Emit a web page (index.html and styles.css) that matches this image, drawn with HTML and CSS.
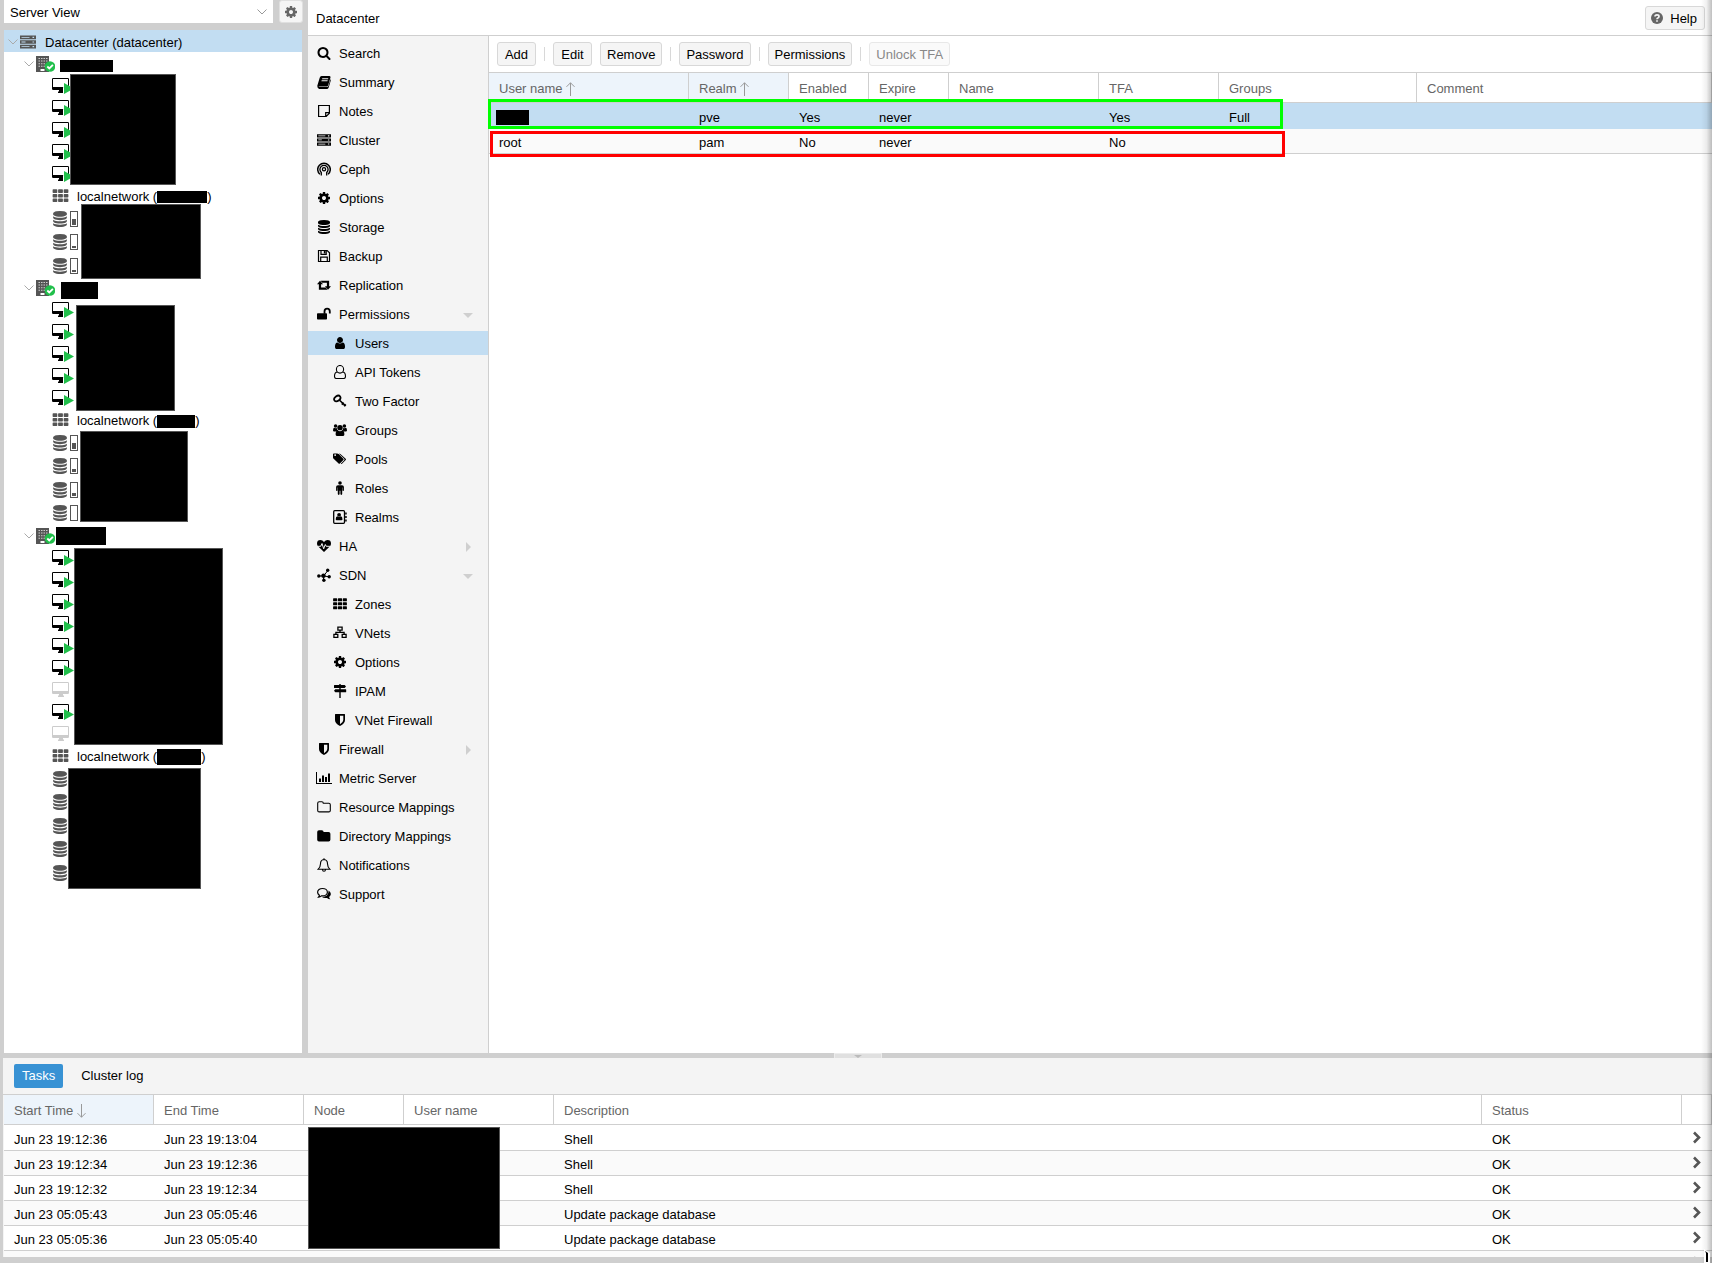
FILE: index.html
```html
<!DOCTYPE html>
<html lang="en">
<head>
<meta charset="utf-8">
<title>Datacenter - Users</title>
<link rel="stylesheet" href="styles.css">
</head>
<body>
<svg class="sprite" aria-hidden="true">
  <symbol id="search" viewBox="0 0 1792 1792"><path d="M1216 832q0-185-131.500-316.500t-316.500-131.500-316.500 131.500-131.500 316.500 131.500 316.500 316.500 131.500 316.500-131.500 131.500-316.500zm512 832q0 52-38 90t-90 38q-54 0-90-38l-343-342q-179 124-399 124-143 0-273.500-55.500t-225-150-150-225-55.500-273.500 55.500-273.500 150-225 225-150 273.500-55.500 273.500 55.500 225 150 150 225 55.500 273.500q0 220-124 399l343 343q37 37 37 90z"/></symbol>
  <symbol id="cog" viewBox="0 0 1792 1792"><path d="M1152 896q0-106-75-181t-181-75-181 75-75 181 75 181 181 75 181-75 75-181zm512-109v222q0 12-8 23t-20 13l-185 28q-19 54-39 91 35 50 107 138 10 12 10 25t-9 23q-27 37-99 108t-94 71q-12 0-26-9l-138-108q-44 23-91 38-16 136-29 186-7 28-36 28h-222q-14 0-24.500-8.500t-11.500-21.500l-28-184q-49-16-90-37l-141 107q-10 9-25 9-14 0-25-11-126-114-165-168-7-10-7-23 0-12 8-23 15-21 51-66.500t54-70.500q-27-50-41-99l-183-27q-13-2-21-12.500t-8-23.500v-222q0-12 8-23t19-13l186-28q14-46 39-92-40-57-107-138-10-12-10-24 0-10 9-23 26-36 98.500-107.500t94.500-71.500q13 0 26 10l138 107q44-23 91-38 16-136 29-186 7-28 36-28h222q14 0 24.500 8.500t11.500 21.500l28 184q49 16 90 37l142-107q9-9 24-9 13 0 25 10 129 119 165 170 7 8 7 22 0 12-8 23-15 21-51 66.500t-54 70.500q26 50 41 98l183 28q13 2 21 12.500t8 23.500z"/></symbol>
  <symbol id="database" viewBox="0 0 1792 1792"><path d="M896 768q237 0 443-43t325-127v170q0 69-103 128t-280 93.500-385 34.500-385-34.500-280-93.500-103-128v-170q119 84 325 127t443 43zm0 768q237 0 443-43t325-127v170q0 69-103 128t-280 93.500-385 34.500-385-34.500-280-93.500-103-128v-170q119 84 325 127t443 43zm0-384q237 0 443-43t325-127v170q0 69-103 128t-280 93.500-385 34.500-385-34.500-280-93.500-103-128v-170q119 84 325 127t443 43zm0-1152q208 0 385 34.500t280 93.500 103 128v128q0 69-103 128t-280 93.500-385 34.500-385-34.500-280-93.500-103-128v-128q0-69 103-128t280-93.500 385-34.500z"/></symbol>
  <symbol id="user" viewBox="0 0 1792 1792"><path d="M1536 1399q0 109-62.500 187t-150.500 78h-854q-88 0-150.500-78t-62.500-187q0-85 8.500-160.500t31.500-152 58.500-131 94-89 134.500-34.500q131 128 313 128t313-128q76 0 134.500 34.500t94 89 58.500 131 31.500 152 8.500 160.500zm-256-887q0 159-112.500 271.500t-271.500 112.500-271.500-112.500-112.500-271.500 112.500-271.500 271.500-112.500 271.500 112.500 112.500 271.500z"/></symbol>
  <symbol id="user-o" viewBox="0 0 14 14"><path fill="none" stroke="currentColor" stroke-width="1.100" d="M4.500 7C2.500 7 1.500 9 1.500 11.500q0 2 1.800 2h7.400q1.800 0 1.800-2C12.500 9 11.500 7 9.500 7M7 .5a3.600 3.800 0 1 1 0 7.600 3.600 3.800 0 1 1 0-7.600z"/></symbol>
  <symbol id="book" viewBox="0 0 14 14"><path fill-rule="evenodd" d="M4.500 1h8q1.300.2 1 1.500l-2.400 8q-.4 1-1.400 1H2.500q-1 0-1 .6h8.600q1 0 1.300-1l2.100-7q.5.700.2 1.600l-2 6.800q-.5 1.500-2 1.500H2Q0 12.800.3 10.800l2.400-8Q3.200 1 4.500 1zM5.300 3.300 5 4.200h6l.3-.9zM4.700 5.300l-.3.900h6l.3-.9z"/></symbol>
  <symbol id="note" viewBox="0 0 14 14"><path fill="none" stroke="currentColor" stroke-width="1.200" d="M1.600 1.500h10.800v7.700l-3.200 3.300H1.600zM12.400 8.700H8.700v3.800"/></symbol>
  <symbol id="server" viewBox="0 0 16 14"><path fill-rule="evenodd" d="M0 .5h16v3.700H0zM0 5.200h16v3.600H0zM0 9.800h16v3.700H0zM1.500 1.900v.9h8v-.9zM1.500 6.500v.9h4v-.9zM1.500 11.200v.9h8v-.9zM12.500 1.700v1.200h1.600V1.700zM12.500 6.400v1.200h1.600V6.400zM12.500 11v1.200h1.600V11z"/></symbol>
  <symbol id="ceph" viewBox="0 0 14 14"><g fill="none" stroke="currentColor"><path stroke-width="1.500" d="M2.900 12.300A6.300 6.300 0 1 1 11.100 12.300"/><path stroke-width="1.300" d="M4.300 13.500v-3A4.100 4.100 0 1 1 9.700 10.500v3"/><circle cx="7" cy="7.200" r="1.600" stroke-width="1.300"/></g></symbol>
  <symbol id="floppy" viewBox="0 0 14 14"><path fill="none" stroke="currentColor" stroke-width="1.200" d="M1.500 1.500h8.700l2.300 2.300v8.700h-11zM3.700 12.500V8.200h6.600v4.300M4 1.500v3.800h5.200V1.500"/><path d="M6.800 1.500h1.700v3H6.800z"/></symbol>
  <symbol id="retweet" viewBox="0 0 15 14"><path d="M3.200 2.500 6.500 6.200H4.400v3.600h4.900l1.900 2.200H2V6.200H0zM11.800 12 8.500 8.300h2.100V4.700H5.700L3.800 2.500H13v5.800h2z"/></symbol>
  <symbol id="unlock" viewBox="0 0 14 14"><path d="M.8 6.200h8.400q.8 0 .8.800v4.700q0 .8-.8.800H.8q-.8 0-.8-.8V7q0-.8.800-.8z"/><path fill="none" stroke="currentColor" stroke-width="1.800" d="M7.500 6.700V4.400a2.600 2.700 0 0 1 5.300 0v2"/></symbol>
  <symbol id="key" viewBox="0 0 14 14"><ellipse cx="4.300" cy="4.500" rx="3.400" ry="2.400" transform="rotate(-35 4.300 4.500)" fill="none" stroke="currentColor" stroke-width="1.800"/><path fill="none" stroke="currentColor" stroke-width="1.700" d="m6.300 6 6.400 6M8.800 10.600l1.900-1.900M11 12.200l1.800-1.800"/></symbol>
  <symbol id="users" viewBox="0 0 15 14"><circle cx="2.800" cy="2.800" r="1.900"/><circle cx="12.200" cy="2.800" r="1.900"/><circle cx="7.500" cy="4.500" r="2.900"/><path d="M0 7.500Q0 4.700 1.200 4.700q1.500.9 3 .2-.2 1.800 1 2.600-1.500 0-2.200 1H1.300Q0 8.500 0 7.500zM15 7.500q0-2.800-1.200-2.800-1.500.9-3 .2.200 1.800-1 2.600 1.500 0 2.200 1h1.700q1.300 0 1.300-1zM2.800 11.800c0-2.500.7-4.400 2.300-4.400q2.400 1.800 4.800 0c1.600 0 2.300 1.900 2.300 4.400q0 1.700-1.700 1.700h-6q-1.700 0-1.700-1.700z"/></symbol>
  <symbol id="tags" viewBox="0 0 15 14"><path fill-rule="evenodd" d="M0 1.900Q0 1 .9 1h3.500q1 0 1.700.7l5 5q.7.700 0 1.400l-3.700 3.700q-.7.700-1.400 0l-5.300-5Q0 6.200 0 5.300zm1.300.9a1 1 0 1 0 2 0 1 1 0 1 0-2 0z"/><path d="M6.200 1q1 0 1.700.7l5.700 5q.7.700 0 1.400l-4 3.900q-.6.600-1.200 0l3.800-3.800q.5-.8-.2-1.500z"/></symbol>
  <symbol id="male" viewBox="0 0 14 14"><circle cx="7" cy="2" r="1.800"/><path d="M5 4.200h4q1.900 0 1.900 1.800v3.200q0 .7-.7.700t-.7-.7V6.500H9.200v6.600q0 .8-.9.800t-.9-.8V9.700h-.8v3.400q0 .8-.9.800t-.9-.8V6.500h-.3v2.700q0 .7-.7.700t-.7-.7V6q0-1.800 1.900-1.800z"/></symbol>
  <symbol id="address" viewBox="0 0 14 14"><rect x=".7" y=".7" width="10.800" height="12.600" rx="1" fill="none" stroke="currentColor" stroke-width="1.300"/><circle cx="6.100" cy="4.800" r="1.900"/><path d="M2.700 9.300q0-2.800 1.800-3 1.600 1.200 3.200 0 1.800.2 1.800 3 0 1-1 1H3.700q-1 0-1-1zM12.200 2.500h1.500v2h-1.500zM12.200 6h1.500v2h-1.500zM12.200 9.500h1.500v2h-1.500z"/></symbol>
  <symbol id="heart" viewBox="0 0 14 14"><path d="M7 13 1 7.200Q0 6 0 4.400 0 1 3.500 1 5.500 1 7 3q1.500-2 3.500-2Q14 1 14 4.400q0 1.600-1 2.800z"/><path fill="none" stroke="#f4f4f4" stroke-width="1" d="M.7 7.300h3L5 4.500l1.700 5.300L8.300 5.500l.9 1.800h4"/></symbol>
  <symbol id="sdn" viewBox="0 0 14 14"><path fill="none" stroke="currentColor" d="m2 8 4.500 0L10.500 3M6.500 8l6 .8M6.500 8v4"/><circle cx="1.800" cy="8" r="1.700"/><circle cx="6.500" cy="7.800" r="2.200"/><circle cx="10.700" cy="2.300" r="1.700"/><circle cx="12.200" cy="8.800" r="1.700"/><circle cx="6.900" cy="12.200" r="1.700"/></symbol>
  <symbol id="grid" viewBox="0 0 14 14"><path d="M.7 1.200h2.900q.6 0 .6.600v1.900q0 .6-.6.600H.7q-.6 0-.6-.6V1.800q0-.6.600-.6zm4.800 0h3q.6 0 .6.600v1.900q0 .6-.6.600h-3q-.6 0-.6-.6V1.800q0-.6.600-.6zm4.900 0h2.900q.6 0 .6.600v1.900q0 .6-.6.600h-2.900q-.6 0-.6-.6V1.800q0-.6.600-.6zM.7 5.200h2.900q.6 0 .6.600v1.900q0 .6-.6.600H.7q-.6 0-.6-.6V5.800q0-.6.600-.6zm4.800 0h3q.6 0 .6.600v1.900q0 .6-.6.600h-3q-.6 0-.6-.6V5.800q0-.6.600-.6zm4.900 0h2.900q.6 0 .6.600v1.900q0 .6-.6.600h-2.900q-.6 0-.6-.6V5.800q0-.6.600-.6zM.7 9.200h2.900q.6 0 .6.600v1.900q0 .6-.6.600H.7q-.6 0-.6-.6V9.800q0-.6.600-.6zm4.800 0h3q.6 0 .6.600v1.900q0 .6-.6.600h-3q-.6 0-.6-.6V9.800q0-.6.600-.6zm4.900 0h2.900q.6 0 .6.600v1.900q0 .6-.6.600h-2.900q-.6 0-.6-.6V9.800q0-.6.600-.6z"/></symbol>
  <symbol id="sitemap" viewBox="0 0 14 14"><path fill="none" stroke="currentColor" stroke-width="1.300" d="M4.900 1.200h4.200v2.900H4.900zM.9 8.300h3.900v3H.9zM9.200 8.300h3.900v3H9.200zM7 4v2.300M2.900 8.500V6.300h8.200v2.200"/></symbol>
  <symbol id="signs" viewBox="0 0 14 14"><path d="M6.300 0h1.400v1h4l1.300 1.500L11.700 4H1.500q-.5 0-.5-.5v-2Q1 1 1.500 1h4.800zM6.300 4h1.400v1.300h5q.5 0 .5.500v2q0 .5-.5.500H2.300L1 6.800l1.300-1.500h4zM6.300 8.300h1.400V14H6.300z"/></symbol>
  <symbol id="shield" viewBox="0 0 14 14"><path fill-rule="evenodd" d="M2 1.500q0-.5.500-.5h9q.5 0 .5.500V7q0 3.600-5 6Q2 10.600 2 7zm5 1.200v8.500q3.300-2 3.300-4.200V2.700z"/></symbol>
  <symbol id="chart" viewBox="0 0 16 14"><path d="M0 1h1v11h15v1H0zM3 7.500h2V11H3zM6 4.500h2V11H6zM9 6h2v5H9zM12 2.500h2V11h-2z"/></symbol>
  <symbol id="folder-o" viewBox="0 0 14 14"><path fill="none" stroke="currentColor" stroke-width="1.100" d="M2.200 1.700h2.600q1.500 0 1.500 1.500h5.500q1.500 0 1.500 1.500v5.700q0 1.500-1.500 1.500H2.200q-1.500 0-1.500-1.500V3.200q0-1.500 1.500-1.500z"/></symbol>
  <symbol id="folder" viewBox="0 0 14 14"><path d="M2 1.200h2.800q1.800 0 1.800 1.700h5q1.800 0 1.800 1.800v6q0 1.800-1.800 1.800H2Q.2 12.500.2 10.700V3Q.2 1.200 2 1.200z"/></symbol>
  <symbol id="bell" viewBox="0 0 14 14"><path fill="none" stroke="currentColor" stroke-width="1.100" d="M7 1.500q3.500.4 3.500 4.200 0 3.400 2.500 5.600H1q2.500-2.200 2.500-5.600Q3.500 1.900 7 1.500zM7 .2v1.300M5.500 11.400q0 1.900 1.500 1.900t1.500-1.900"/></symbol>
  <symbol id="comments" viewBox="0 0 14 14"><path fill="none" stroke="currentColor" stroke-width="1.200" d="M5.500 1.500c2.800 0 4.900 1.600 4.900 3.700S8.300 8.900 5.500 8.900L4.400 8.800Q3.200 10 1.500 10.100q.8-.9.900-1.900Q.6 7 .6 5.200C.6 3.100 2.700 1.500 5.500 1.500z"/><path d="M11.600 3.600q4.300 3.400.5 6.400.2 1.300 1.300 2.200-1.800.1-3.400-1.300-3.200.5-5-.9 6.700 0 6.600-6.400z"/></symbol>
  <symbol id="building" viewBox="0 0 19 16"><path fill="#555" d="M0 0h13v16H0z"/><path fill="none" stroke="#fff" stroke-width="9" stroke-dasharray="1 1.600" d="M7 2v9.500" opacity=".7"/><path stroke="#555" stroke-width="1" d="M4.500 1v11M7 1v11M9.500 1v11"/><path fill="#fff" d="M4.500 13h4v2h-4z"/><circle cx="14" cy="10.500" r="5.300" fill="#21bf4b"/><path fill="none" stroke="#fff" stroke-width="1.800" d="m11.300 10.500 2 2 3.600-3.700"/></symbol>
  <symbol id="monitor" viewBox="0 0 23 16"><path fill-rule="evenodd" d="M1.200 0h14.600Q17 0 17 1.200V11q0 1-1.200 1H11v1.500h1V15H6v-1.500h1V12H1.200Q0 12 0 11V1.200Q0 0 1.200 0zM1 1v8h15V1z"/></symbol>
  <symbol id="play" viewBox="0 0 23 16"><path fill="#fff" d="M11 4.500V16h2z"/><path fill="#21bf4b" d="M12 5v11l10-5.500z"/></symbol>
  <symbol id="chevron" viewBox="0 0 10 6"><path fill="none" stroke="currentColor" d="m.5.5 4.500 4.500L9.500.5"/></symbol>
  <symbol id="arrow" viewBox="0 0 9 14"><path fill="none" stroke="currentColor" d="M4.500 14V.7M.5 4.800l4-4 4 4"/></symbol>
  <symbol id="right" viewBox="0 0 8 13"><path fill="none" stroke="currentColor" stroke-width="2.600" d="m1 1.500 5 5-5 5"/></symbol>
</svg>

<div class="workspace">
  <aside class="resources">
    <div class="view-bar">
      <div class="view-picker">
        <select aria-label="View"><option>Server View</option></select>
        <svg class="picker-arrow"><use href="#chevron"/></svg>
      </div>
      <button class="gear" aria-label="Settings"><svg class="icon"><use href="#cog"/></svg></button>
    </div>
    <div class="tree">
      <div class="row root"><svg class="twist"><use href="#chevron"/></svg><svg class="server"><use href="#server"/></svg>Datacenter (datacenter)</div>

      <div class="row host"><svg class="twist"><use href="#chevron"/></svg><svg class="building"><use href="#building"/></svg><span class="mask name-a"></span></div>
      <div class="group">
        <div class="row leaf"><svg class="vm"><use href="#monitor"/><use href="#play"/></svg></div>
        <div class="row leaf"><svg class="vm"><use href="#monitor"/><use href="#play"/></svg></div>
        <div class="row leaf"><svg class="vm"><use href="#monitor"/><use href="#play"/></svg></div>
        <div class="row leaf"><svg class="vm"><use href="#monitor"/><use href="#play"/></svg></div>
        <div class="row leaf"><svg class="vm"><use href="#monitor"/><use href="#play"/></svg></div>
        <span class="mask over guests-a"></span>
      </div>
      <div class="row leaf named"><svg class="net"><use href="#grid"/></svg>localnetwork (<span class="mask net-a"></span>)</div>
      <div class="group stores">
        <div class="row leaf"><svg class="disk"><use href="#database"/></svg><span class="usage"><i style="height:50%"></i></span></div>
        <div class="row leaf"><svg class="disk"><use href="#database"/></svg><span class="usage"><i style="height:17%"></i></span></div>
        <div class="row leaf"><svg class="disk"><use href="#database"/></svg><span class="usage"><i style="height:9%"></i></span></div>
        <span class="mask over stores-a"></span>
      </div>

      <div class="row host"><svg class="twist"><use href="#chevron"/></svg><svg class="building"><use href="#building"/></svg><span class="mask name-b"></span></div>
      <div class="group">
        <div class="row leaf"><svg class="vm"><use href="#monitor"/><use href="#play"/></svg></div>
        <div class="row leaf"><svg class="vm"><use href="#monitor"/><use href="#play"/></svg></div>
        <div class="row leaf"><svg class="vm"><use href="#monitor"/><use href="#play"/></svg></div>
        <div class="row leaf"><svg class="vm"><use href="#monitor"/><use href="#play"/></svg></div>
        <div class="row leaf"><svg class="vm"><use href="#monitor"/><use href="#play"/></svg></div>
        <span class="mask over guests-b"></span>
      </div>
      <div class="row leaf named"><svg class="net"><use href="#grid"/></svg>localnetwork (<span class="mask net-b"></span>)</div>
      <div class="group stores">
        <div class="row leaf"><svg class="disk"><use href="#database"/></svg><span class="usage"><i style="height:50%"></i></span></div>
        <div class="row leaf"><svg class="disk"><use href="#database"/></svg><span class="usage"><i style="height:25%"></i></span></div>
        <div class="row leaf"><svg class="disk"><use href="#database"/></svg><span class="usage"><i style="height:17%"></i></span></div>
        <div class="row leaf"><svg class="disk"><use href="#database"/></svg><span class="usage"><i style="height:0%"></i></span></div>
        <span class="mask over stores-b"></span>
      </div>

      <div class="row host"><svg class="twist"><use href="#chevron"/></svg><svg class="building"><use href="#building"/></svg><span class="mask name-c"></span></div>
      <div class="group">
        <div class="row leaf"><svg class="vm"><use href="#monitor"/><use href="#play"/></svg></div>
        <div class="row leaf"><svg class="vm"><use href="#monitor"/><use href="#play"/></svg></div>
        <div class="row leaf"><svg class="vm"><use href="#monitor"/><use href="#play"/></svg></div>
        <div class="row leaf"><svg class="vm"><use href="#monitor"/><use href="#play"/></svg></div>
        <div class="row leaf"><svg class="vm"><use href="#monitor"/><use href="#play"/></svg></div>
        <div class="row leaf"><svg class="vm"><use href="#monitor"/><use href="#play"/></svg></div>
        <div class="row leaf"><svg class="vm off"><use href="#monitor"/></svg></div>
        <div class="row leaf"><svg class="vm"><use href="#monitor"/><use href="#play"/></svg></div>
        <div class="row leaf"><svg class="vm off"><use href="#monitor"/></svg></div>
        <span class="mask over guests-c"></span>
      </div>
      <div class="row leaf named"><svg class="net"><use href="#grid"/></svg>localnetwork (<span class="mask net-c"></span>)</div>
      <div class="group stores">
        <div class="row leaf"><svg class="disk"><use href="#database"/></svg></div>
        <div class="row leaf"><svg class="disk"><use href="#database"/></svg></div>
        <div class="row leaf"><svg class="disk"><use href="#database"/></svg></div>
        <div class="row leaf"><svg class="disk"><use href="#database"/></svg></div>
        <div class="row leaf"><svg class="disk"><use href="#database"/></svg></div>
        <span class="mask over stores-c"></span>
      </div>
    </div>
  </aside>

  <main class="content">
    <header class="title-bar">
      <span class="title">Datacenter</span>
      <button class="btn help"><svg class="icon" viewBox="0 0 14 14"><circle cx="7" cy="7" r="6"/><path fill="none" stroke="#f5f5f5" stroke-width="1.700" d="M5 5.600Q5 3.900 7 3.900t2 1.500q0 1-1.100 1.500Q7 7.300 7 8.300M7 9.200v1.600"/></svg>Help</button>
    </header>
    <div class="split">
      <nav class="menu">
        <a href="#"><svg class="icon"><use href="#search"/></svg>Search</a>
        <a href="#"><svg class="icon"><use href="#book"/></svg>Summary</a>
        <a href="#"><svg class="icon"><use href="#note"/></svg>Notes</a>
        <a href="#"><svg class="icon"><use href="#server"/></svg>Cluster</a>
        <a href="#"><svg class="icon"><use href="#ceph"/></svg>Ceph</a>
        <a href="#"><svg class="icon"><use href="#cog"/></svg>Options</a>
        <a href="#"><svg class="icon"><use href="#database"/></svg>Storage</a>
        <a href="#"><svg class="icon"><use href="#floppy"/></svg>Backup</a>
        <a href="#"><svg class="icon"><use href="#retweet"/></svg>Replication</a>
        <a href="#" class="open"><svg class="icon"><use href="#unlock"/></svg>Permissions</a>
        <a href="#" class="sub current"><svg class="icon"><use href="#user"/></svg>Users</a>
        <a href="#" class="sub"><svg class="icon"><use href="#user-o"/></svg>API Tokens</a>
        <a href="#" class="sub"><svg class="icon"><use href="#key"/></svg>Two Factor</a>
        <a href="#" class="sub"><svg class="icon"><use href="#users"/></svg>Groups</a>
        <a href="#" class="sub"><svg class="icon"><use href="#tags"/></svg>Pools</a>
        <a href="#" class="sub"><svg class="icon"><use href="#male"/></svg>Roles</a>
        <a href="#" class="sub"><svg class="icon"><use href="#address"/></svg>Realms</a>
        <a href="#" class="closed"><svg class="icon"><use href="#heart"/></svg>HA</a>
        <a href="#" class="open"><svg class="icon"><use href="#sdn"/></svg>SDN</a>
        <a href="#" class="sub"><svg class="icon"><use href="#grid"/></svg>Zones</a>
        <a href="#" class="sub"><svg class="icon"><use href="#sitemap"/></svg>VNets</a>
        <a href="#" class="sub"><svg class="icon"><use href="#cog"/></svg>Options</a>
        <a href="#" class="sub"><svg class="icon"><use href="#signs"/></svg>IPAM</a>
        <a href="#" class="sub"><svg class="icon"><use href="#shield"/></svg>VNet Firewall</a>
        <a href="#" class="closed"><svg class="icon"><use href="#shield"/></svg>Firewall</a>
        <a href="#" class="wide"><svg class="icon"><use href="#chart"/></svg>Metric Server</a>
        <a href="#"><svg class="icon"><use href="#folder-o"/></svg>Resource Mappings</a>
        <a href="#"><svg class="icon"><use href="#folder"/></svg>Directory Mappings</a>
        <a href="#"><svg class="icon"><use href="#bell"/></svg>Notifications</a>
        <a href="#"><svg class="icon"><use href="#comments"/></svg>Support</a>
      </nav>
      <section class="users">
        <div class="toolbar">
          <button class="btn">Add</button><i class="sep"></i>
          <button class="btn">Edit</button>
          <button class="btn">Remove</button><i class="sep"></i>
          <button class="btn">Password</button><i class="sep"></i>
          <button class="btn">Permissions</button><i class="sep"></i>
          <button class="btn" disabled>Unlock TFA</button>
        </div>
        <div class="grid-area">
          <table>
            <colgroup><col class="w200"><col class="w100"><col class="w80"><col class="w80"><col class="w150"><col class="w120"><col class="w198"><col></colgroup>
            <thead><tr><th class="sorted">User name <svg class="sort"><use href="#arrow"/></svg></th><th class="sorted">Realm <svg class="sort"><use href="#arrow"/></svg></th><th>Enabled</th><th>Expire</th><th>Name</th><th>TFA</th><th>Groups</th><th>Comment</th></tr></thead>
            <tbody>
              <tr class="selected"><td><span class="mask user-name"></span></td><td>pve</td><td>Yes</td><td>never</td><td></td><td>Yes</td><td>Full</td><td></td></tr>
              <tr><td>root</td><td>pam</td><td>No</td><td>never</td><td></td><td>No</td><td></td><td></td></tr>
            </tbody>
          </table>
          <span class="frame green"></span>
          <span class="frame red"></span>
        </div>
      </section>
    </div>
  </main>
</div>

<div class="splitter"><button class="collapse" aria-label="Collapse log"></button></div>

<section class="log">
  <div class="tabs"><button class="tab active">Tasks</button><button class="tab">Cluster log</button></div>
  <div class="log-grid">
    <table>
      <colgroup><col class="w150"><col class="w150"><col class="w100"><col class="w150"><col><col class="w200"><col class="w30"></colgroup>
      <thead><tr><th class="sorted">Start Time <svg class="sort down"><use href="#arrow"/></svg></th><th>End Time</th><th>Node</th><th>User name</th><th>Description</th><th>Status</th><th></th></tr></thead>
      <tbody>
        <tr><td>Jun 23 19:12:36</td><td>Jun 23 19:13:04</td><td></td><td></td><td>Shell</td><td>OK</td><td class="go"><svg><use href="#right"/></svg></td></tr>
        <tr><td>Jun 23 19:12:34</td><td>Jun 23 19:12:36</td><td></td><td></td><td>Shell</td><td>OK</td><td class="go"><svg><use href="#right"/></svg></td></tr>
        <tr><td>Jun 23 19:12:32</td><td>Jun 23 19:12:34</td><td></td><td></td><td>Shell</td><td>OK</td><td class="go"><svg><use href="#right"/></svg></td></tr>
        <tr><td>Jun 23 05:05:43</td><td>Jun 23 05:05:46</td><td></td><td></td><td>Update package database</td><td>OK</td><td class="go"><svg><use href="#right"/></svg></td></tr>
        <tr><td>Jun 23 05:05:36</td><td>Jun 23 05:05:40</td><td></td><td></td><td>Update package database</td><td>OK</td><td class="go"><svg><use href="#right"/></svg></td></tr>
        <tr><td></td><td></td><td></td><td></td><td></td><td></td><td class="go"><svg><use href="#right"/></svg></td></tr>
      </tbody>
    </table>
    <span class="mask over log-mask"></span>
  </div>
</section>
<div class="edge-shade"></div>
<svg class="pointer" viewBox="0 0 6 14"><path fill="#fff" d="M0 0l6 4v10H0z"/><path d="M1 2l3 2v9H2V4z"/></svg>
</body>
</html>
```

FILE: styles.css
```css
* { box-sizing: border-box; }

body {
  margin: 0;
  height: 100vh;
  display: flex;
  flex-direction: column;
  position: relative;
  overflow: hidden;
  padding-bottom: 6px;
  background: #cfcfcf;
  color: #000;
  font: 13px/16px "Liberation Sans", Arial, sans-serif;
}

button, select { font: inherit; color: inherit; margin: 0; }
svg { display: block; flex: none; fill: currentColor; }
.sprite { position: absolute; width: 0; height: 0; }
.icon { width: 14px; height: 14px; overflow: visible; }

.workspace { flex: 1; min-height: 0; display: flex; gap: 6px; padding-left: 4px; }

/* resource tree */
.resources { width: 298px; flex: none; display: flex; flex-direction: column; gap: 7px; }
.view-bar { display: flex; gap: 6px; height: 23px; margin-right: -1px; }
.view-picker { flex: 1; position: relative; background: #fff; }
.view-picker select {
  width: 100%;
  height: 23px;
  padding: 2px 6px 0;
  border: 0;
  background: none;
  appearance: none;
}
.picker-arrow { position: absolute; right: 6px; top: 9px; width: 10px; height: 6px; color: #999; pointer-events: none; }
.gear {
  width: 24px;
  padding: 0;
  display: flex;
  align-items: center;
  justify-content: center;
  border: 1px solid #e0e0e0;
  border-radius: 3px;
  background: #f5f5f5;
  color: #666;
}
.tree { flex: 1; min-height: 0; background: #fff; }
.row { height: 22px; display: flex; align-items: center; white-space: pre; }
.stores .row:nth-child(odd) { height: 23px; }
.stores .row:nth-child(even) { height: 24px; }
.root { padding-left: 4px; padding-top: 4px; margin-bottom: 1px; background: #c2ddf2; }
.host { padding-left: 20px; }
.leaf { padding-left: 48px; }
.named { padding-top: 2px; }
.group { position: relative; }
.twist { width: 10px; height: 6px; color: #aaa; margin-right: 2px; }
.server { width: 16px; height: 14px; margin-right: 9px; color: #555; }
.root svg { margin-bottom: 2px; }
.building { width: 19px; height: 16px; }
.vm { width: 23px; height: 16px; }
.vm.off { color: #ccc; }
.net { width: 17px; height: 16px; margin: 0 8px 2px 0; color: #555; }
.disk { width: 16px; height: 16px; margin-right: 2px; color: #555; }
.usage {
  display: flex;
  align-items: flex-end;
  width: 8px;
  height: 16px;
  border: 1px solid #555;
  padding: 1px;
}
.usage i { flex: 1; background: #555; }

/* blacked-out names */
.mask { display: block; flex: none; background: #000; }
.over { position: absolute; border: 1px solid #555; }
.name-a { width: 53px; height: 12px; margin-left: 5px; margin-top: 4px; }
.name-b { width: 37px; height: 17px; margin-left: 6px; margin-top: 4px; }
.name-c { width: 50px; height: 18px; margin-left: 1px; }
.net-a { width: 50px; height: 12px; }
.net-b { width: 38px; height: 13px; }
.net-c { width: 44px; height: 16px; }
.guests-a { left: 66px; top: -1px; width: 106px; height: 111px; }
.stores-a { left: 77px; top: -3px; width: 120px; height: 75px; }
.guests-b { left: 72px; top: 6px; width: 99px; height: 106px; }
.stores-b { left: 76px; top: 0; width: 108px; height: 91px; }
.guests-c { left: 70px; top: 1px; width: 149px; height: 197px; }
.stores-c { left: 64px; top: 1px; width: 133px; height: 121px; }
.user-name { width: 33px; height: 15px; margin: 0 0 1px -3px; }
.log-mask { left: 304px; top: 32px; width: 192px; height: 122px; }

/* content panel */
.content { flex: 1; min-width: 0; display: flex; flex-direction: column; background: #fff; }
.title-bar {
  height: 36px;
  display: flex;
  align-items: center;
  justify-content: space-between;
  padding: 0 7px 0 8px;
  border-bottom: 1px solid #cfcfcf;
}
.title { padding-top: 2px; }
.btn {
  height: 24px;
  min-width: 39px;
  padding: 2px 6px 0;
  border: 1px solid #d8d8d8;
  border-radius: 3px;
  background: #f5f5f5;
  white-space: nowrap;
}
.btn:disabled { color: #888; background: #fafafa; border-color: #e8e8e8; }
.help { display: flex; align-items: center; gap: 6px; padding: 2px 7px 0 4px; }
.help .icon { margin-bottom: 2px; fill: #666; }

.split { flex: 1; min-height: 0; display: flex; }
.menu {
  width: 181px;
  flex: none;
  display: flex;
  flex-direction: column;
  gap: 5px;
  padding-top: 5px;
  background: #f4f4f4;
  border-right: 1px solid #cfcfcf;
}
.menu a {
  height: 24px;
  display: flex;
  align-items: center;
  gap: 8px;
  padding: 2px 15px 0 9px;
  color: #000;
  text-decoration: none;
}
.menu .icon { margin-bottom: 2px; }
.menu .sub { padding-left: 25px; }
.menu .wide { gap: 7px; padding-left: 8px; }
.menu .wide .icon { width: 16px; }
.menu .current { background: #c2ddf2; }
.open::after, .closed::after { content: ""; margin-left: auto; border: 5px solid transparent; }
.open::after { border-top-color: #cfcfcf; border-bottom: 0; }
.closed::after { border-left-color: #cfcfcf; border-right: 0; margin-right: 2px; }

.users { flex: 1; min-width: 0; }
.toolbar { height: 37px; display: flex; align-items: center; gap: 8px; padding: 0 8px; border-bottom: 1px solid #cfcfcf; }
.sep { width: 1px; height: 14px; background: #d8d8d8; }
.grid-area { position: relative; }

/* grids */
table { width: 100%; table-layout: fixed; border-collapse: separate; border-spacing: 0; }
.w30 { width: 30px; }
.w80 { width: 80px; }
.w100 { width: 100px; }
.w120 { width: 120px; }
.w150 { width: 150px; }
.w198 { width: 198px; }
.w200 { width: 200px; }
th {
  height: 30px;
  padding: 8px 10px 5px;
  border: solid #cfcfcf;
  border-width: 0 1px 1px 0;
  background: #fff;
  color: #666;
  font-weight: normal;
  text-align: left;
  white-space: nowrap;
}
th.sorted { background: #edf4fb; }
.sort { display: inline-block; width: 9px; height: 14px; vertical-align: -3px; color: #999; }
.sort.down { transform: rotate(180deg); }
td { height: 25px; padding: 6px 10px 2px; border-bottom: 1px solid #cfcfcf; background: #fff; }
tr:first-child td { height: 26px; padding-top: 7px; }
tr:nth-child(even) td { background: #fafafa; }
tr.selected td { background: #c2ddf2; border-color: #c2ddf2; }
td.go { padding: 5px 9px 0; vertical-align: top; }
tr:first-child td.go { padding-top: 6px; }
.go svg { width: 8px; height: 13px; margin-left: 2px; color: #555; }

/* highlight frames drawn over the rows */
.frame { position: absolute; border: 3px solid; }
.green { left: -1px; top: 26px; width: 795px; height: 30px; border-color: #0f0; }
.red { left: 1px; top: 58px; width: 795px; height: 26px; border-color: #f00; }

/* bottom log */
.splitter { height: 5px; display: flex; justify-content: center; padding-left: 4px; }
.collapse { position: relative; width: 48px; height: 5px; padding: 0; border: 1px solid #ececec; border-bottom: 0; background: #e0e0e0; }
.collapse::after { content: ""; position: absolute; left: 19px; top: 1px; border: 4px solid transparent; border-top: 3px solid #bbb; border-bottom: 0; }
.log { height: 199px; flex: none; display: flex; flex-direction: column; margin-left: 3px; background: #f4f4f4; }
.tabs { display: flex; gap: 10px; padding: 6px 11px; height: 37px; border-bottom: 1px solid #cfcfcf; }
.tab { height: 24px; padding: 0 8px; border: 0; border-radius: 2px; background: none; }
.tab.active { background: #3892d4; color: #fff; }
.log-grid { position: relative; flex: 1; min-height: 0; overflow: hidden; margin-left: 1px; }

/* dark fall-off along the right window edge */
.edge-shade { position: absolute; top: 0; right: 0; bottom: 0; width: 11px; background: linear-gradient(to right, transparent, rgba(0, 0, 0, .06) 50%, rgba(0, 0, 0, .25)); pointer-events: none; }
.pointer { position: absolute; right: 2px; bottom: 0; width: 6px; height: 14px; }
```
